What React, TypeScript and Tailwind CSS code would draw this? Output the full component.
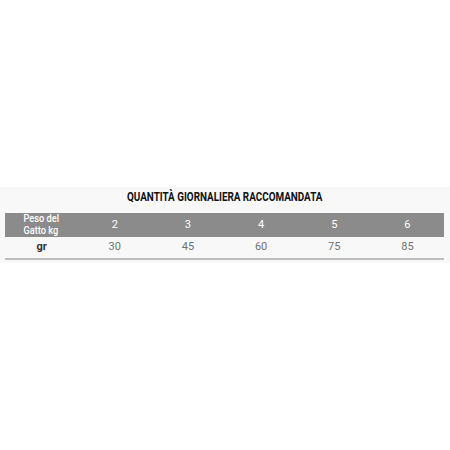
import React from "react";

export default function App() {
  const cols = ["2", "3", "4", "5", "6"];
  const vals = ["30", "45", "60", "75", "85"];
  return (
    <div className="w-[450px] h-[450px] bg-white" style={{ fontFamily: '"Roboto", "Liberation Sans", sans-serif' }}>
      <div className="h-[187px]" />
      <div className="bg-[#f8f8f8] h-[76px] pt-[1px]">
        <div className="h-[19px] flex items-center justify-center">
          <span className="inline-block text-[12.5px] font-bold text-[#111] scale-x-[0.79] whitespace-nowrap">QUANTITÀ GIORNALIERA RACCOMANDATA</span>
        </div>
        <div className="mx-[5px] mt-[6px] w-[439px]">
          <div className="grid grid-cols-6 bg-[#8b8b8b] h-[24px] text-white text-[11px] items-center">
            <div className="flex justify-center">
              <div className="font-medium scale-x-[0.88] text-[10.5px] leading-[12px]">Peso del<br />Gatto kg</div>
            </div>
            {cols.map((c) => (
              <div key={c} className="text-center font-normal">{c}</div>
            ))}
          </div>
          <div className="grid grid-cols-6 h-[23px] items-center border-b-2 border-[#bdbdbd] text-[11px]">
            <div className="text-center font-bold text-[#333]">gr</div>
            {vals.map((v) => (
              <div key={v} className="text-center text-[#707070]">{v}</div>
            ))}
          </div>
        </div>
      </div>
    </div>
  );
}
